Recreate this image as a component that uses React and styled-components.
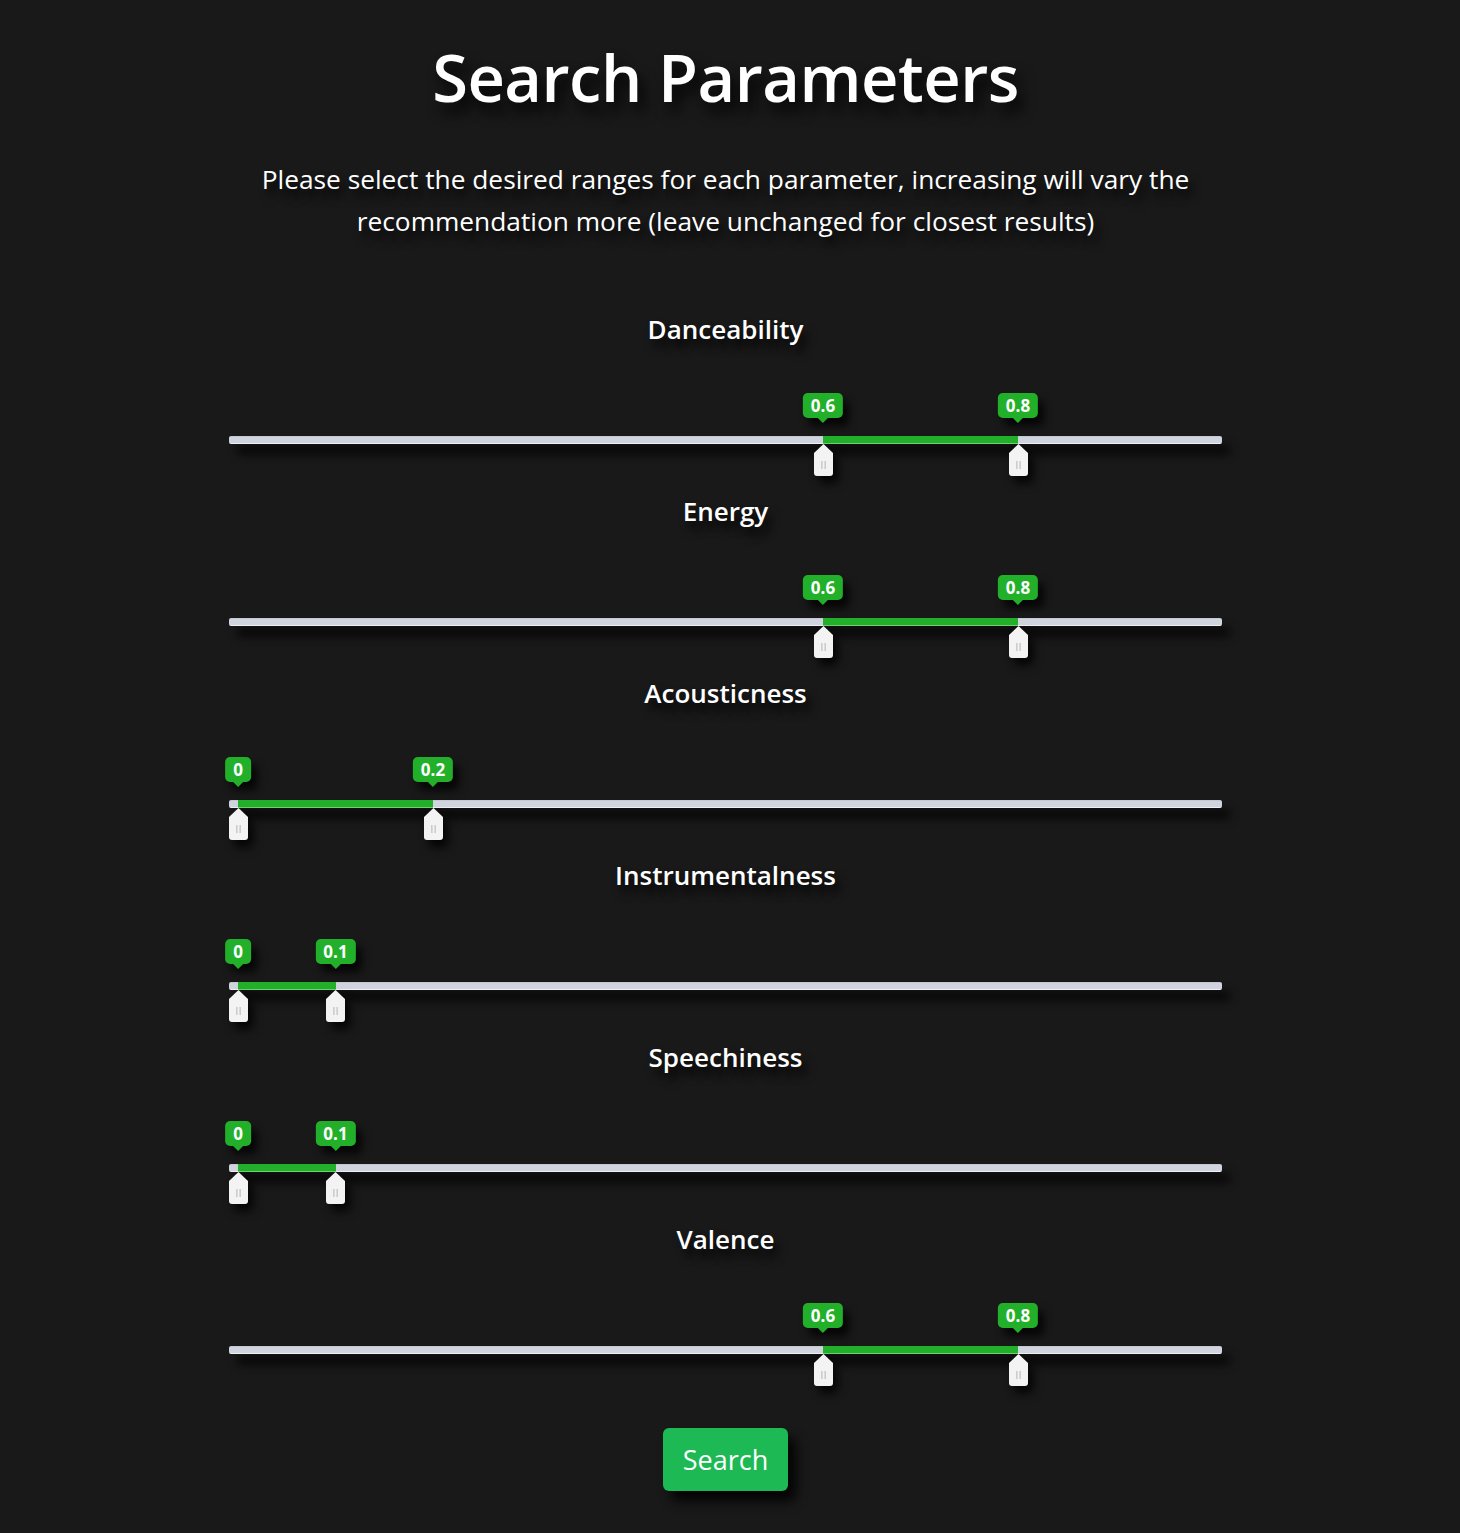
import React from "react";
import styled, { createGlobalStyle } from "styled-components";

const GlobalStyle = createGlobalStyle`
  html, body {
    margin: 0;
    padding: 0;
    background: #191919;
  }
  body {
    font-family: "Open Sans", "Noto Sans", sans-serif;
    color: #fff;
  }
`;

const Page = styled.div`
  width: 1451px;
  min-height: 1531px;
  display: flex;
  flex-direction: column;
  align-items: center;
  background: #191919;
`;

const Title = styled.h1`
  margin: 34px 0 0;
  font-size: 65px;
  font-weight: 600;
  line-height: 86px;
  letter-spacing: -0.5px;
  text-shadow: 6px 10px 14px rgba(0, 0, 0, 0.9);
`;

const Subtitle = styled.p`
  margin: 38px 0 0;
  max-width: 980px;
  text-align: center;
  font-size: 26.3px;
  line-height: 42px;
  text-shadow: 5px 8px 10px rgba(0, 0, 0, 0.9);
`;

const Params = styled.div`
  margin-top: 69px;
  display: flex;
  flex-direction: column;
  align-items: center;
`;

const Section = styled.div`
  display: flex;
  flex-direction: column;
  align-items: center;
  width: 993px;
`;

const Label = styled.div`
  font-size: 26px;
  font-weight: 600;
  line-height: 36px;
  text-shadow: 5px 8px 10px rgba(0, 0, 0, 0.9);
`;

const SliderBlock = styled.div`
  width: 100%;
  height: 146px;
  padding-top: 89px;
  box-sizing: border-box;
`;

const Track = styled.div`
  position: relative;
  width: 100%;
  height: 8px;
  border-radius: 2px;
  background: linear-gradient(to bottom, #b9bcc5 0, #d0d4de 1px, #d0d4de 7px, #eef0f4 7px);
  box-shadow: 8px 10px 10px rgba(0, 0, 0, 0.85);
`;

const Range = styled.div`
  position: absolute;
  top: 0;
  height: 7px;
  background: #22b02b;
  border-bottom: 1px solid #6fd074;
`;

const Handle = styled.div`
  position: absolute;
  top: 0;
  width: 0;
  height: 0;
`;

const Tip = styled.div`
  position: absolute;
  bottom: 18px;
  left: 0;
  transform: translateX(-50%);
  background: #22b02b;
  color: #fff;
  font-size: 17px;
  font-weight: 700;
  line-height: 25px;
  padding: 0 8px;
  border-radius: 5px;
  white-space: nowrap;
  box-shadow: 6px 8px 8px rgba(0, 0, 0, 0.8);
  &:after {
    content: "";
    position: absolute;
    left: 50%;
    bottom: -5px;
    margin-left: -5px;
    border-left: 5px solid transparent;
    border-right: 5px solid transparent;
    border-top: 5px solid #22b02b;
  }
`;

const Thumb = styled.svg`
  position: absolute;
  top: 8px;
  left: -9.5px;
  filter: drop-shadow(5px 7px 5px rgba(0, 0, 0, 0.85));
`;

const SearchButton = styled.button`
  margin-top: 25px;
  padding: 0 20px;
  height: 63px;
  border: none;
  border-radius: 6px;
  background: #1db954;
  color: #fff;
  font-family: inherit;
  font-size: 27px;
  box-shadow: 8px 10px 12px rgba(0, 0, 0, 0.85);
  cursor: pointer;
`;

const params = [
  { name: "Danceability", lo: 0.6, hi: 0.8 },
  { name: "Energy", lo: 0.6, hi: 0.8 },
  { name: "Acousticness", lo: 0, hi: 0.2 },
  { name: "Instrumentalness", lo: 0, hi: 0.1 },
  { name: "Speechiness", lo: 0, hi: 0.1 },
  { name: "Valence", lo: 0.6, hi: 0.8 },
];

const INSET = 9;
const SPAN = 975;

function ThumbIcon() {
  return (
    <Thumb width="19" height="32" viewBox="0 0 19 32">
      <path
        d="M9.5 0 L19 9 L19 29 Q19 32 16 32 L3 32 Q0 32 0 29 L0 9 Z"
        fill="#f3f3f3"
      />
      <rect x="7.2" y="17" width="1.3" height="8" fill="#c4c4c4" />
      <rect x="10.5" y="17" width="1.3" height="8" fill="#c4c4c4" />
    </Thumb>
  );
}

function RangeSlider({ lo, hi }) {
  const x = (v) => INSET + v * SPAN;
  return (
    <SliderBlock>
      <Track>
        <Range style={{ left: x(lo), width: x(hi) - x(lo) }} />
        {[lo, hi].map((v, i) => (
          <Handle key={i} style={{ left: x(v) }}>
            <Tip>{v}</Tip>
            <ThumbIcon />
          </Handle>
        ))}
      </Track>
    </SliderBlock>
  );
}

export default function App() {
  return (
    <Page>
      <GlobalStyle />
      <Title>Search Parameters</Title>
      <Subtitle>
        Please select the desired ranges for each parameter, increasing will
        vary the recommendation more (leave unchanged for closest results)
      </Subtitle>
      <Params>
        {params.map((p) => (
          <Section key={p.name}>
            <Label>{p.name}</Label>
            <RangeSlider lo={p.lo} hi={p.hi} />
          </Section>
        ))}
      </Params>
      <SearchButton>Search</SearchButton>
    </Page>
  );
}
